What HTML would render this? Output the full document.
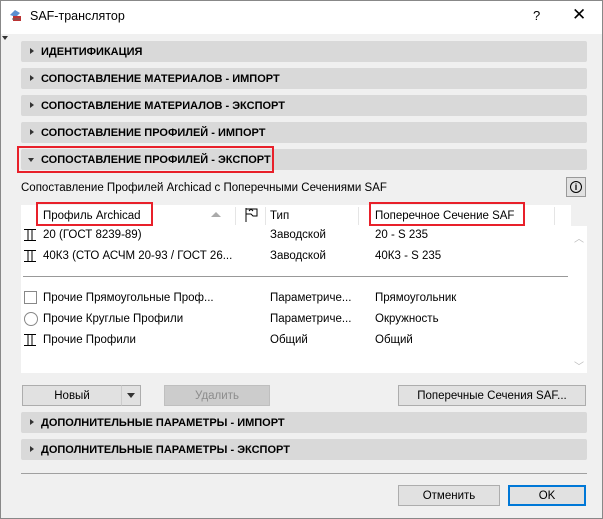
<!DOCTYPE html>
<html><head><meta charset="utf-8"><style>
*{box-sizing:border-box;margin:0;padding:0}
body{width:603px;height:519px;overflow:hidden;background:#f0f0f0;font-family:"Liberation Sans","DejaVu Sans",sans-serif;font-size:11.5px;color:#000;position:relative}
.a{position:absolute}
.win{left:0;top:0;width:603px;height:519px;border:1px solid #888}
.title{left:1px;top:1px;width:601px;height:33px;background:#fff}
.sec{position:absolute;left:21px;width:566px;height:21px;background:#d9d9d9;border-radius:2px;font-weight:bold;font-size:11px;line-height:23px;padding-left:20px}
.sec:before{content:"";position:absolute;left:9px;top:7px;border-left:4px solid #333;border-top:3.5px solid transparent;border-bottom:3.5px solid transparent}
.sec.open:before{left:7px;top:9px;border-top:4px solid #333;border-left:3.5px solid transparent;border-right:3.5px solid transparent;border-bottom:0}
.btn{position:absolute;height:21px;background:#e1e1e1;border:1px solid #adadad;text-align:center;line-height:21px;font-size:11.5px}
.red{position:absolute;border:2px solid #e8202a}
.t{position:absolute;white-space:nowrap}
</style></head><body>
<div class="a win"></div>
<div class="a title"></div>
<svg class="a" style="left:8px;top:7px" width="16" height="16"><path d="M2 8 L7 3 L12 6 L8 10Z" fill="#5a8fd0"/><path d="M5 9 L13 9 L13 14 L5 14Z" fill="#b33"/><path d="M4 12 L12 12" stroke="#666"/></svg>
<div class="t" style="left:30px;top:9px;font-size:12.5px">SAF-транслятор</div>
<div class="t" style="left:533px;top:8px;font-size:13px">?</div>
<div class="t" style="left:572px;top:5px;font-size:17px">✕</div>
<div class="a" style="left:2px;top:36px;border-top:4px solid #333;border-left:3px solid transparent;border-right:3px solid transparent"></div>
<div class="sec" style="top:41px">ИДЕНТИФИКАЦИЯ</div>
<div class="sec" style="top:68px">СОПОСТАВЛЕНИЕ МАТЕРИАЛОВ - ИМПОРТ</div>
<div class="sec" style="top:95px">СОПОСТАВЛЕНИЕ МАТЕРИАЛОВ - ЭКСПОРТ</div>
<div class="sec" style="top:122px">СОПОСТАВЛЕНИЕ ПРОФИЛЕЙ - ИМПОРТ</div>
<div class="sec open" style="top:149px">СОПОСТАВЛЕНИЕ ПРОФИЛЕЙ - ЭКСПОРТ</div>
<div class="red" style="left:17px;top:146px;width:257px;height:27px"></div>
<div class="t" style="left:21px;top:182px">Сопоставление Профилей Archicad с Поперечными Сечениями SAF</div>
<div class="a" style="left:566px;top:177px;width:20px;height:20px;border:1px solid #999;background:#e1e1e1;text-align:center"><div style="margin:3px auto;width:12px;height:12px;border:1px solid #000;border-radius:50%;font-size:9px;line-height:10px;font-weight:bold">i</div></div>
<div class="a" style="left:21px;top:205px;width:550px;height:168px;background:#fff"></div>
<div class="a" style="left:570px;top:226px;width:17px;height:147px;background:#fff"></div>
<div class="a" style="left:235px;top:207px;width:1px;height:18px;background:#e5e5e5"></div>
<div class="a" style="left:265px;top:207px;width:1px;height:18px;background:#e5e5e5"></div>
<div class="a" style="left:358px;top:207px;width:1px;height:18px;background:#e5e5e5"></div>
<div class="a" style="left:554px;top:207px;width:1px;height:18px;background:#e5e5e5"></div>
<div class="t" style="left:43px;top:210px">Профиль Archicad</div>
<div class="a" style="left:211px;top:212px;border-bottom:5px solid #aaa;border-left:5px solid transparent;border-right:5px solid transparent"></div>
<svg class="a" style="left:244px;top:207px" width="16" height="16"><path d="M2 1V15M2 2H13V9H9L7 7H2" fill="none" stroke="#000"/><path d="M5 4 L7 2 L9 4" fill="none" stroke="#000"/></svg>
<div class="t" style="left:270px;top:210px">Тип</div>
<div class="t" style="left:375px;top:210px">Поперечное Сечение SAF</div>
<div class="red" style="left:36px;top:202px;width:117px;height:24px"></div>
<div class="red" style="left:369px;top:202px;width:156px;height:24px"></div>
<svg class="a" style="left:23px;top:228px" width="14" height="14"><path d="M1 1.5H13M1 12.5H13M5 1.5V12.5M9 1.5V12.5" stroke="#000" fill="none"/></svg>
<svg class="a" style="left:23px;top:249px" width="14" height="14"><path d="M1 1.5H13M1 12.5H13M5 1.5V12.5M9 1.5V12.5" stroke="#000" fill="none"/></svg>
<svg class="a" style="left:23px;top:333px" width="14" height="14"><path d="M1 1.5H13M1 12.5H13M5 1.5V12.5M9 1.5V12.5" stroke="#000" fill="none"/></svg>
<div class="a" style="left:24px;top:291px;width:13px;height:13px;border:1px solid #888"></div>
<div class="a" style="left:24px;top:312px;width:14px;height:14px;border:1px solid #888;border-radius:50%"></div>
<div class="t" style="left:43px;top:229px">20 (ГОСТ 8239-89)</div>
<div class="t" style="left:43px;top:250px">40К3 (СТО АСЧМ 20-93 / ГОСТ 26...</div>
<div class="t" style="left:43px;top:292px">Прочие Прямоугольные Проф...</div>
<div class="t" style="left:43px;top:313px">Прочие Круглые Профили</div>
<div class="t" style="left:43px;top:334px">Прочие Профили</div>
<div class="t" style="left:270px;top:229px">Заводской</div>
<div class="t" style="left:270px;top:250px">Заводской</div>
<div class="t" style="left:270px;top:292px">Параметриче...</div>
<div class="t" style="left:270px;top:313px">Параметриче...</div>
<div class="t" style="left:270px;top:334px">Общий</div>
<div class="t" style="left:375px;top:229px">20 - S 235</div>
<div class="t" style="left:375px;top:250px">40К3 - S 235</div>
<div class="t" style="left:375px;top:292px">Прямоугольник</div>
<div class="t" style="left:375px;top:313px">Окружность</div>
<div class="t" style="left:375px;top:334px">Общий</div>
<div class="a" style="left:23px;top:276px;width:545px;height:1px;background:#999"></div>
<div class="t" style="left:574px;top:230px;color:#bbb;font-size:10px">︿</div>
<div class="t" style="left:574px;top:358px;color:#bbb;font-size:10px">﹀</div>
<div class="btn" style="left:22px;top:385px;width:100px">Новый</div>
<div class="btn" style="left:121px;top:385px;width:20px;border-left:1px solid #ccc"><span style="display:inline-block;border-top:5px solid #333;border-left:4px solid transparent;border-right:4px solid transparent;vertical-align:middle"></span></div>
<div class="btn" style="left:164px;top:385px;width:106px;background:#ccc;border-color:#bfbfbf;color:#8c8c8c">Удалить</div>
<div class="btn" style="left:398px;top:385px;width:188px">Поперечные Сечения SAF...</div>
<div class="sec" style="top:412px">ДОПОЛНИТЕЛЬНЫЕ ПАРАМЕТРЫ - ИМПОРТ</div>
<div class="sec" style="top:439px">ДОПОЛНИТЕЛЬНЫЕ ПАРАМЕТРЫ - ЭКСПОРТ</div>
<div class="a" style="left:21px;top:473px;width:566px;height:1px;background:#a0a0a0"></div>
<div class="btn" style="left:398px;top:485px;width:102px">Отменить</div>
<div class="btn" style="left:508px;top:485px;width:78px;border:2px solid #0078d7;line-height:19px">OK</div>
</body></html>
